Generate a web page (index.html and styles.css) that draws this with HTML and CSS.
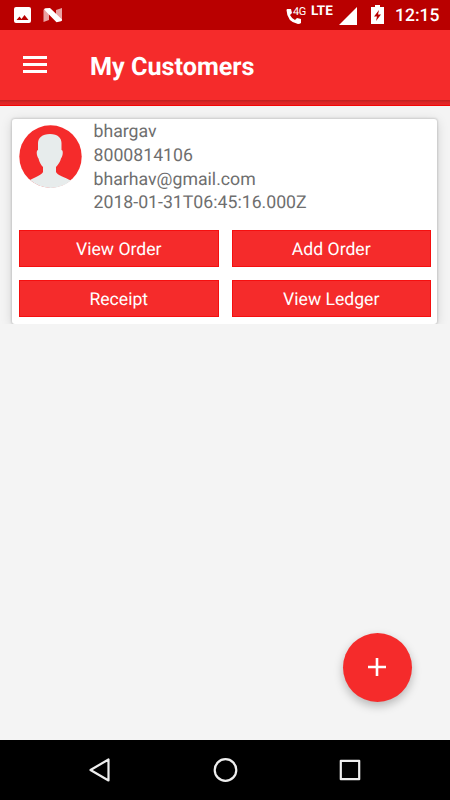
FILE: index.html
```
<!DOCTYPE html>
<html lang="en">
<head>
    <meta charset="UTF-8">
    <meta name="viewport" content="width=device-width, initial-scale=1.0">
    <title>My Customers</title>
    <link rel="stylesheet" href="styles.css">
</head>
<body>
    <div class="status-bar">
        <svg class="status-icon" width="70" height="30" viewBox="0 0 70 30">
            <path fill="#fff" fill-rule="evenodd" d="M16 7h13a2 2 0 0 1 2 2v12a2 2 0 0 1-2 2H16a2 2 0 0 1-2-2V9a2 2 0 0 1 2-2zM16.500 20h12l-4-5-3 4-2-2.500z"/>
            <path fill="#e9a2a2" d="M43.500 9.500l5.500 3v7.500l-5.500 2zM62 8v13l-6-3v-8z"/>
            <path fill="#fff" d="M44 9.500q0-1 1.500-1.200L50 8l12 11.500q0 1.500-1 1.700l-4.500 1z"/>
        </svg>
        <div class="status-right">
            <svg class="phone-icon" width="17" height="17" viewBox="0 0 17 17">
                <path fill="#fff" d="M1 1h4l1 4-2 2q2 4 5 5l2-2 4 1v4q-1 1-3 1Q1 14 .500 2z"/>
            </svg>
            <span class="network-small">4G</span>
            <span class="network">LTE</span>
            <svg class="signal-icon" width="18" height="18" viewBox="0 0 18 18"><path fill="#fff" d="M0 18L18 0v18z"/></svg>
            <svg class="battery-icon" width="13" height="19" viewBox="0 0 13 19">
                <path fill="#fff" fill-rule="evenodd" d="M4 0h5v2h4v17H0V2h4zM8 5l-5 6.500h3L5 16l5-6.500H7z"/>
            </svg>
            <span class="time">12:15</span>
        </div>
    </div>

    <header class="toolbar">
        <button class="menu-btn" aria-label="Menu">
            <span></span>
            <span></span>
            <span></span>
        </button>
        <h1>My Customers</h1>
    </header>
    <div class="toolbar-strip"></div>

    <main class="content">
        <div class="list">
            <div class="card">
                <div class="customer">
                    <svg class="avatar" width="63" height="63" viewBox="0 0 63 63">
                        <circle cx="31.500" cy="31.500" r="31.200" fill="#f52b2b"/>
                        <path fill="#e7ecec" d="M31 9c8 0 11.500 4 11.500 9v7c2 0 1.500 6-.500 8.500-1 4-3 6-5 8.500v5c1 3 9 5.500 15 8.500A31.200 31.200 0 0 1 11 55c5-3 12-5 13-8v-5c-2-2-3.500-4.500-4.500-8.500-2-2.500-2.500-8-.500-8.500v-7c0-5 4-9 12-9z"/>
                    </svg>
                    <div class="details">
                        <p>bhargav</p>
                        <p>8000814106</p>
                        <p>bharhav@gmail.com</p>
                        <p>2018-01-31T06:45:16.000Z</p>
                    </div>
                </div>
                <div class="actions">
                    <button class="action">View Order</button>
                    <button class="action">Add Order</button>
                    <button class="action">Receipt</button>
                    <button class="action">View Ledger</button>
                </div>
            </div>
        </div>
        <button class="fab" aria-label="Add customer">
            <svg width="18" height="18" viewBox="0 0 18 18"><path stroke="#fff" stroke-width="2.600" d="M9 0v18M0 9h18"/></svg>
        </button>
    </main>

    <nav class="nav-bar">
        <svg width="26" height="26" viewBox="0 0 26 26"><path d="M20.500 2.500v21L2.500 13z"/></svg>
        <svg width="26" height="26" viewBox="0 0 26 26"><circle cx="12.500" cy="13" r="10.800"/></svg>
        <svg width="26" height="26" viewBox="0 0 26 26"><rect x="3.800" y="3.800" width="18.400" height="18.400"/></svg>
    </nav>
</body>
</html>
```

FILE: styles.css
```
* {
    box-sizing: border-box;
}

body {
    display: flex;
    flex-direction: column;
    width: 450px;
    height: 800px;
    margin: 0;
    overflow: hidden;
    font-family: Roboto, "Liberation Sans", sans-serif;
    text-rendering: geometricPrecision;
    background-color: #f4f4f4;
}

button {
    border: none;
    padding: 0;
    font-family: inherit;
    text-rendering: inherit;
    cursor: pointer;
}

.status-bar {
    display: flex;
    justify-content: space-between;
    height: 30px;
    background-color: #b90000;
    color: white;
}

.status-right {
    display: flex;
    align-items: flex-start;
    padding-right: 10px;
}

.phone-icon {
    margin-top: 8px;
}

.network-small {
    width: 13px;
    margin: 5px 0 0 -10px;
    font-size: 11px;
    line-height: 13px;
    letter-spacing: -0.5px;
}

.network {
    width: 23px;
    margin: 5px 0 0 5px;
    font-size: 13.5px;
    font-weight: bold;
    line-height: 13px;
}

.signal-icon {
    margin: 7px 0 0 5px;
}

.battery-icon {
    margin: 5px 0 0 14px;
}

.time {
    width: 45px;
    margin: 6px 0 0 11px;
    font-size: 17.5px;
    font-weight: 500;
    line-height: 21px;
}

.toolbar {
    display: flex;
    align-items: center;
    height: 70px;
    padding-left: 23px;
    background-color: #f52b2b;
    color: white;
}

.menu-btn {
    display: flex;
    flex-direction: column;
    gap: 4px;
    width: 24px;
    margin-top: -1px;
    background: none;
}

.menu-btn span {
    height: 3px;
    background-color: white;
}

h1 {
    margin: 5px 0 0 43px;
    font-size: 25.2px;
    font-weight: bold;
    line-height: 30px;
}

.toolbar-strip {
    height: 6px;
    background: linear-gradient(#bd2121, #dc2626 40%, #e52828 80%, #f50505 81%);
}

.content {
    position: relative;
    flex: 1;
}

.list {
    height: 218px;
    padding: 13px 13px 0 12px;
    overflow: hidden;
}

.card {
    height: 205px;
    padding: 5px 6px 6px 7px;
    border-radius: 3px;
    background-color: white;
    box-shadow: 0 0 2px 1px rgba(0,0,0,0.12), 0 2px 12px rgba(0,0,0,0.15);
}

.customer {
    display: flex;
    gap: 12px;
    height: 106px;
}

.avatar {
    margin: 1px 0 0 -0.5px;
}

.details p {
    margin: 0;
    font-size: 17.7px;
    line-height: 23.8px;
    color: #6e6e6e;
}

.details {
    margin-top: -3px;
}

.actions {
    display: grid;
    grid-template-columns: 1fr 1fr;
    gap: 13px;
}

.action {
    height: 37px;
    padding-top: 3px;
    border: 1px solid #f50f0f;
    background-color: #f52b2b;
    color: white;
    font-size: 17.6px;
}

.fab {
    position: absolute;
    right: 38px;
    bottom: 38px;
    display: flex;
    align-items: center;
    justify-content: center;
    width: 69.5px;
    height: 69.5px;
    border-radius: 50%;
    background-color: #f52b2b;
    box-shadow: 0 4px 10px rgba(0,0,0,0.25);
}

.nav-bar {
    display: flex;
    align-items: center;
    justify-content: space-between;
    height: 60px;
    padding: 0 87px 0 88px;
    background-color: black;
}

.nav-bar svg {
    fill: none;
    stroke: #eee;
    stroke-width: 2.2;
    stroke-linejoin: round;
}
```
